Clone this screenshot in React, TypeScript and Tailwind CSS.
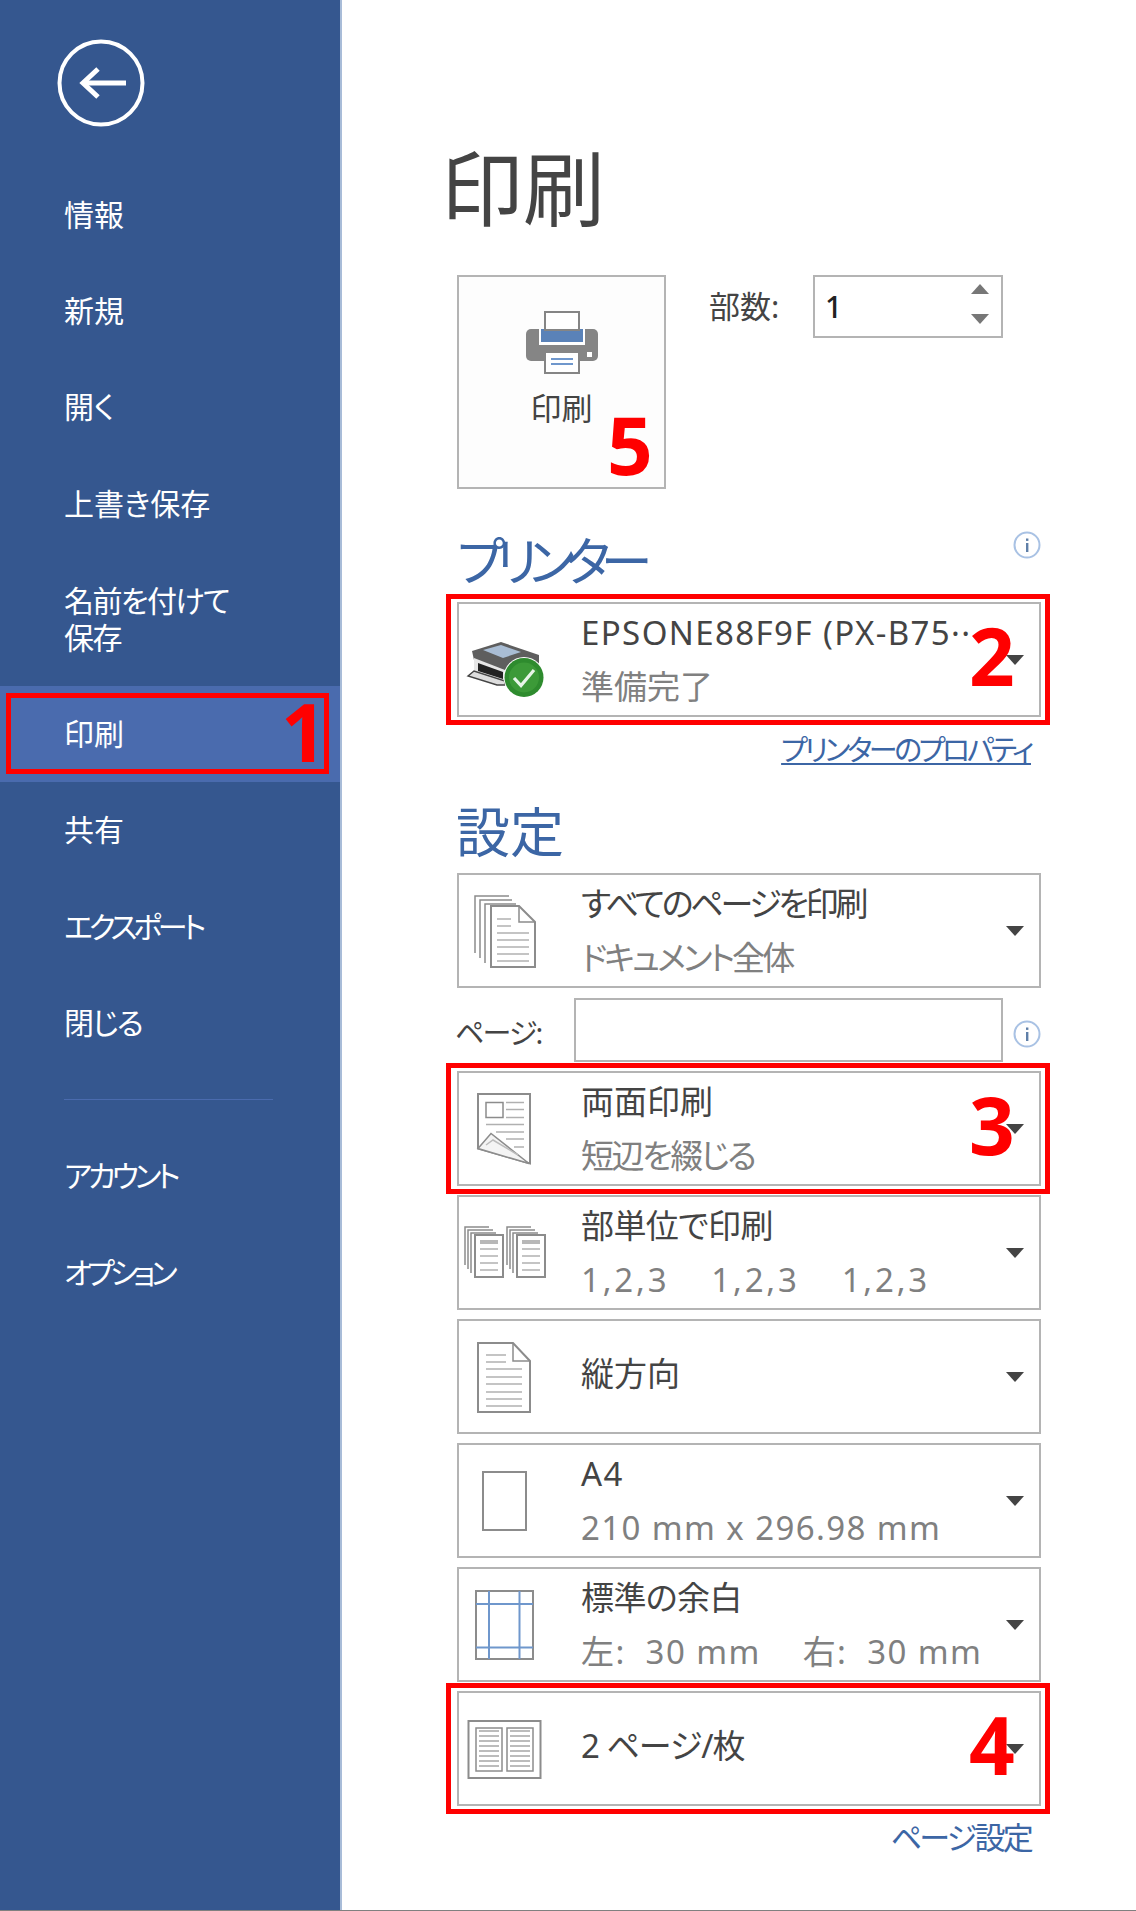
import * as React from "react";

const ICON = "#8c8c8c";
const TITLE = "text-[33px]";
const LATIN = "text-[33px] tracking-[1.4px]";

function Badge({ n, className }: { n: string; className: string }) {
  return (
    <span
      className={`absolute text-[80px] leading-none font-bold text-[#ff0000] font-['Noto_Sans',sans-serif] ${className}`}
    >
      {n}
    </span>
  );
}

function Hline({ x1, x2, y, c = "#b0b0b0", w = 1.5 }: { x1: number; x2: number; y: number; c?: string; w?: number }) {
  return <line x1={x1} x2={x2} y1={y} y2={y} stroke={c} strokeWidth={w} />;
}

function IconBox({ children }: { children: React.ReactNode }) {
  return (
    <svg viewBox="0 0 92 92" className="w-[92px] h-[92px] block" fill="none">
      {children}
    </svg>
  );
}

function StatusPrinterIcon() {
  return (
    <IconBox>
      <path d="M13 37 L42 28 L80 41 L80 50 L50 62 L15 46 Z" fill="#5e5e5e" />
      <path d="M24 36 L42 31 L62 38 L44 44 Z" fill="#a9bdd4" />
      <path d="M15 44 L46 56 L46 70 L15 60 Z" fill="#e6e6e6" />
      <path d="M19 49 L44 58 L44 65 L19 57 Z" fill="#222" />
      <path d="M9 62 L15 57 L46 67 L46 71 L38 71 Z" fill="#ddd" stroke="#444" strokeWidth="1.5" />
      <circle cx="65" cy="63.5" r="20.5" fill="#fff" />
      <circle cx="65" cy="63.5" r="19.5" fill="#2e8b2e" />
      <circle cx="65" cy="63.5" r="15" fill="#3c9a38" />
      <path d="M55 64 L62 71.5 L75 56" stroke="#e8f5e8" strokeWidth="3.2" />
    </IconBox>
  );
}

function AllPagesIcon() {
  return (
    <IconBox>
      <path d="M16 68 V11 H50" stroke={ICON} strokeWidth="1.5" />
      <path d="M21 73 V15 H53" stroke={ICON} strokeWidth="1.5" />
      <path d="M26 78 V19 H57" stroke={ICON} strokeWidth="1.5" />
      <path d="M32 21 H60 L76 37 V82 H32 Z" fill="#fff" stroke={ICON} strokeWidth="2" />
      <path d="M60 21 V37 H76" stroke={ICON} strokeWidth="1.5" />
      <Hline x1={38} x2={52} y={34} />
      <Hline x1={38} x2={52} y={41} />
      <Hline x1={38} x2={70} y={48} />
      <Hline x1={38} x2={70} y={55} />
      <Hline x1={38} x2={70} y={62} />
      <Hline x1={38} x2={70} y={69} />
      <Hline x1={38} x2={70} y={76} />
    </IconBox>
  );
}

function DuplexIcon() {
  return (
    <IconBox>
      <path d="M19 11 H71 V80.5 L19 65.5 Z" fill="#fff" stroke={ICON} strokeWidth="2" />
      <rect x="27" y="19.5" width="17" height="15" stroke={ICON} strokeWidth="1.5" />
      <Hline x1={47} x2={65} y={19.5} />
      <Hline x1={47} x2={65} y={26.5} />
      <Hline x1={47} x2={65} y={34.5} />
      <Hline x1={27} x2={65} y={41.5} />
      <Hline x1={37} x2={65} y={49} />
      <Hline x1={47} x2={65} y={56} />
      <Hline x1={55} x2={65} y={64} />
      <path d="M19 65.5 L32 50.5 L70 80.5 Z" fill="#f4f4f4" stroke={ICON} strokeWidth="1.5" />
      <path d="M27 62 L34 57 L59 72" stroke="#bcbcbc" strokeWidth="1.5" />
    </IconBox>
  );
}

function CollatedSheet({ x }: { x: number }) {
  return (
    <g>
      <path d={`M${x} 58 V20 H${x + 24}`} stroke={ICON} strokeWidth="1.5" />
      <path d={`M${x + 3} 62 V23 H${x + 28}`} stroke={ICON} strokeWidth="1.5" />
      <path d={`M${x + 6} 66 V26 H${x + 31}`} stroke={ICON} strokeWidth="1.5" />
      <rect x={x + 10} y={28} width={28} height={42} fill="#fff" stroke={ICON} strokeWidth="2" />
      <rect x={x + 15} y={33} width={18} height={4} fill="#b8b8b8" />
      <Hline x1={x + 15} x2={x + 33} y={42} />
      <Hline x1={x + 15} x2={x + 33} y={49} />
      <Hline x1={x + 15} x2={x + 33} y={56} />
      <Hline x1={x + 15} x2={x + 33} y={63} />
    </g>
  );
}

function CollateIcon() {
  return (
    <IconBox>
      <CollatedSheet x={6} />
      <CollatedSheet x={48} />
    </IconBox>
  );
}

function PortraitIcon() {
  return (
    <IconBox>
      <path d="M19 12 H54 L71 30 V81 H19 Z" fill="#fff" stroke={ICON} strokeWidth="2" />
      <path d="M54 12 V30 H71" stroke={ICON} strokeWidth="1.5" />
      <Hline x1={27} x2={47} y={24} />
      <Hline x1={27} x2={47} y={31} />
      <Hline x1={27} x2={63} y={38} />
      <Hline x1={27} x2={63} y={46} />
      <Hline x1={27} x2={63} y={53} />
      <Hline x1={27} x2={63} y={61} />
      <Hline x1={27} x2={63} y={68} />
      <Hline x1={27} x2={63} y={75} />
    </IconBox>
  );
}

function PaperIcon() {
  return (
    <IconBox>
      <rect x="24" y="17" width="43" height="58" stroke={ICON} strokeWidth="2" />
    </IconBox>
  );
}

function MarginsIcon() {
  return (
    <IconBox>
      <rect x="17" y="12" width="57" height="68" stroke={ICON} strokeWidth="2" />
      <line x1="30" x2="30" y1="12" y2="80" stroke="#6f97cc" strokeWidth="2" />
      <line x1="60.5" x2="60.5" y1="12" y2="80" stroke="#6f97cc" strokeWidth="2" />
      <line x1="17" x2="74" y1="25" y2="25" stroke="#6f97cc" strokeWidth="2" />
      <line x1="17" x2="74" y1="68.5" y2="68.5" stroke="#6f97cc" strokeWidth="2" />
    </IconBox>
  );
}

function TwoPerSheetIcon() {
  const rows = [28, 33, 38, 43, 48, 53, 58, 63];
  return (
    <IconBox>
      <rect x="9.5" y="18" width="72" height="57" stroke={ICON} strokeWidth="2" />
      <rect x="17" y="25" width="26" height="43" fill="#fff" stroke={ICON} strokeWidth="1.5" />
      <rect x="48" y="25" width="26" height="43" fill="#fff" stroke={ICON} strokeWidth="1.5" />
      {rows.map((y) => (
        <g key={y}>
          <Hline x1={20} x2={40} y={y} c="#bcbcbc" w={2} />
          <Hline x1={51} x2={71} y={y} c="#bcbcbc" w={2} />
        </g>
      ))}
    </IconBox>
  );
}

function PrintIcon() {
  return (
    <svg viewBox="0 0 72 63" className="w-[72px] h-[63px] block" fill="none">
      <rect x="0" y="18" width="72" height="32" rx="5" fill="#858585" />
      <rect x="13" y="18" width="46" height="16" fill="#fff" />
      <rect x="15" y="18" width="42" height="13" fill="#5a82b8" />
      <rect x="19" y="1" width="34" height="18" fill="#fff" stroke="#858585" strokeWidth="2" />
      <rect x="61" y="41" width="5" height="5" fill="#fff" />
      <rect x="19" y="41" width="34" height="21" fill="#fff" stroke="#858585" strokeWidth="2" />
      <rect x="25" y="47" width="22" height="2" fill="#6f97cc" />
      <rect x="25" y="52" width="22" height="2" fill="#6f97cc" />
    </svg>
  );
}

function InfoIcon() {
  return (
    <svg viewBox="0 0 28 28" className="w-[28px] h-[28px] block" fill="none">
      <circle cx="14" cy="14" r="12.5" stroke="#a9c2e4" strokeWidth="2" />
      <rect x="13" y="12" width="2.4" height="9" fill="#5f7fa8" />
      <rect x="13" y="7.5" width="2.4" height="2.4" fill="#5f7fa8" />
    </svg>
  );
}

function Chevron() {
  return <div className="w-0 h-0 border-x-[9px] border-x-transparent border-t-[10px] border-t-[#444]" />;
}

function Option({
  icon,
  title,
  sub,
  titleClass = TITLE,
  subClass = TITLE,
  className = "",
  children,
}: {
  icon: React.ReactNode;
  title: string;
  sub?: React.ReactNode;
  titleClass?: string;
  subClass?: string;
  className?: string;
  children?: React.ReactNode;
}) {
  return (
    <div className={`relative flex items-center w-[584px] h-[115px] border-2 border-[#b4b4b4] bg-white ${className}`}>
      <div className="w-[122px] shrink-0">{icon}</div>
      <div className={`flex-1 min-w-0 flex flex-col justify-center gap-[14px] ${sub ? "" : "-mt-[6px]"}`}>
        <div className={`leading-[40px] text-[#444] whitespace-nowrap ${titleClass}`}>{title}</div>
        {sub && <div className={`leading-[40px] text-[#808080] whitespace-nowrap ${subClass}`}>{sub}</div>}
      </div>
      <div className="w-[33px] shrink-0 flex">
        <Chevron />
      </div>
      {children}
    </div>
  );
}

function RedFrame({ className }: { className: string }) {
  return <div className={`absolute border-[5px] border-[#ff0000] pointer-events-none ${className}`} />;
}

const NAV_TOP = [
  { label: "情報", track: "" },
  { label: "新規", track: "" },
  { label: "開く", track: "" },
  { label: "上書き保存", track: "" },
];
const NAV_MID = [
  { label: "共有", track: "" },
  { label: "エクスポート", track: "tracking-[-4.2px]" },
  { label: "閉じる", track: "tracking-[-1.6px]" },
];
const NAV_END = [
  { label: "アカウント", track: "tracking-[-4px]" },
  { label: "オプション", track: "tracking-[-4.6px]" },
];

function NavItem({ label, track }: { label: string; track: string }) {
  return <div className={`h-[96.4px] flex items-center pl-[64px] ${track}`}>{label}</div>;
}

export default function App() {
  return (
    <div className="w-[1136px] h-[1911px] flex bg-white overflow-hidden border-b border-[#808080] box-border font-['Noto_Sans','Noto_Sans_CJK_JP',sans-serif] [font-feature-settings:'palt']">
      <aside className="w-[342px] shrink-0 box-border border-r-2 border-[#a8bcd8] bg-[#35578f] text-white text-[30px] pt-[39px]">
        <div className="pl-[57px] h-[127px]">
          <svg viewBox="0 0 88 88" className="w-[88px] h-[88px] block" fill="none">
            <circle cx="44" cy="44" r="41.5" stroke="#fff" strokeWidth="4" />
            <path d="M26 44 H69" stroke="#fff" strokeWidth="5" />
            <path d="M41 30 L26 44 L41 58" stroke="#fff" strokeWidth="5" />
          </svg>
        </div>
        {NAV_TOP.map((l) => (
          <NavItem key={l.label} {...l} />
        ))}
        <div className="h-[134px] flex items-center pl-[64px] leading-[37px] tracking-[-1.6px]">
          <div>
            名前を付けて
            <br />
            保存
          </div>
        </div>
        <div className="relative h-[96px] flex items-center pl-[64px] bg-[#4a6bae]">
          印刷
          <RedFrame className="left-[6px] top-[7px] w-[323px] h-[81px]" />
          <Badge n="1" className="left-[281px] top-[5px]" />
        </div>
        {NAV_MID.map((l) => (
          <NavItem key={l.label} {...l} />
        ))}
        <div className="h-[57px] flex items-center pl-[64px]">
          <div className="w-[209px] h-[1px] bg-[#4a6bae]" />
        </div>
        {NAV_END.map((l) => (
          <NavItem key={l.label} {...l} />
        ))}
      </aside>

      <main className="flex-1 pl-[115px] pt-[136px] text-[#444]">
        <h1 className="text-[82px] leading-[104px] text-[#444] -ml-[16px]">印刷</h1>

        <div className="flex items-start mt-[35px]">
          <div className="relative w-[209px] h-[214px] border-2 border-[#b4b4b4] bg-[#fdfdfd] flex flex-col items-center pt-[34px]">
            <PrintIcon />
            <div className="text-[31px] leading-[40px] mt-[14px]">印刷</div>
            <Badge n="5" className="left-[148px] top-[127px]" />
          </div>
          <div className="ml-[43px] text-[31px] leading-[40px] mt-[11px] w-[104px]">部数:</div>
          <div className="relative w-[190px] h-[63px] border-2 border-[#b4b4b4] flex items-center pl-[10px] text-[30px] font-medium text-[#222]">
            1
            <div className="absolute right-[12px] top-[7px] w-0 h-0 border-x-[9px] border-x-transparent border-b-[10px] border-b-[#777]" />
            <div className="absolute right-[12px] top-[37px] w-0 h-0 border-x-[9px] border-x-transparent border-t-[10px] border-t-[#777]" />
          </div>
        </div>

        <div className="relative w-[584px] mt-[38px] h-[68px] text-[#3c66a5] text-[52px] leading-[68px] tracking-[-9.5px]">
          プリンター
          <div className="absolute left-[556px] top-[4px]">
            <InfoIcon />
          </div>
        </div>

        <Option
          className="mt-[7px]"
          icon={<StatusPrinterIcon />}
          title="EPSONE88F9F (PX-B75··"
          titleClass={LATIN}
          sub="準備完了"
        >
          <RedFrame className="-left-[13px] -top-[10px] w-[604px] h-[131px]" />
          <Badge n="2" className="left-[510px] top-[11px]" />
        </Option>

        <div className="w-[574px] text-right text-[#3c66a5] text-[29px] leading-[40px] underline tracking-[-3.4px] mt-[13px]">
          プリンターのプロパティ
        </div>

        <div className="text-[#3c66a5] text-[54px] leading-[68px] -ml-[1px] mt-[28px] mb-[7px]">設定</div>

        <div className="flex flex-col">
          <Option
            icon={<AllPagesIcon />}
            title="すべてのページを印刷"
            titleClass="text-[33px] tracking-[-3.2px]"
            sub="ドキュメント全体"
            subClass="text-[33px] tracking-[-2.9px]"
          />
          <div className="flex items-center w-[584px] h-[64px] mt-[10px]">
            <div className="w-[117px] -ml-[2px] mr-[2px] text-[29px] tracking-[-1.8px] mt-[5px]">ページ:</div>
            <div className="w-[429px] h-[64px] border-2 border-[#b4b4b4]" />
            <div className="ml-[10px] mt-[8px]">
              <InfoIcon />
            </div>
          </div>
          <Option
            className="mt-[9px]"
            icon={<DuplexIcon />}
            title="両面印刷"
            sub="短辺を綴じる"
            subClass="text-[33px] tracking-[-2.4px]"
          >
            <RedFrame className="-left-[13px] -top-[10px] w-[604px] h-[131px]" />
            <Badge n="3" className="left-[510px] top-[11px]" />
          </Option>
          <Option
            className="mt-[9px]"
            icon={<CollateIcon />}
            title="部単位で印刷"
            titleClass="text-[33px] tracking-[-0.6px]"
            subClass="text-[33px] tracking-[2.8px]"
            sub={
              <span className="flex gap-[42px]">
                <span>1,2,3</span>
                <span>1,2,3</span>
                <span>1,2,3</span>
              </span>
            }
          />
          <Option className="mt-[9px]" icon={<PortraitIcon />} title="縦方向" />
          <Option
            className="mt-[9px]"
            icon={<PaperIcon />}
            title="A4"
            titleClass={LATIN}
            sub="210 mm x 296.98 mm"
            subClass={LATIN}
          />
          <Option
            className="mt-[9px]"
            icon={<MarginsIcon />}
            title="標準の余白"
            titleClass="text-[33px] tracking-[-0.6px]"
            subClass={LATIN}
            sub={
              <span className="flex gap-[42px]">
                <span className="whitespace-pre">左:  30 mm</span>
                <span className="whitespace-pre">右:  30 mm</span>
              </span>
            }
          />
          <Option
            className="mt-[9px]"
            icon={<TwoPerSheetIcon />}
            title="2 ページ/枚"
            titleClass="text-[33px] tracking-[-1px]"
          >
            <RedFrame className="-left-[13px] -top-[10px] w-[604px] h-[131px]" />
            <Badge n="4" className="left-[510px] top-[11px]" />
          </Option>
        </div>

        <div className="w-[574px] text-right text-[#3c66a5] text-[31px] leading-[40px] tracking-[-2.7px] mt-[11px]">
          ページ設定
        </div>
      </main>
    </div>
  );
}
